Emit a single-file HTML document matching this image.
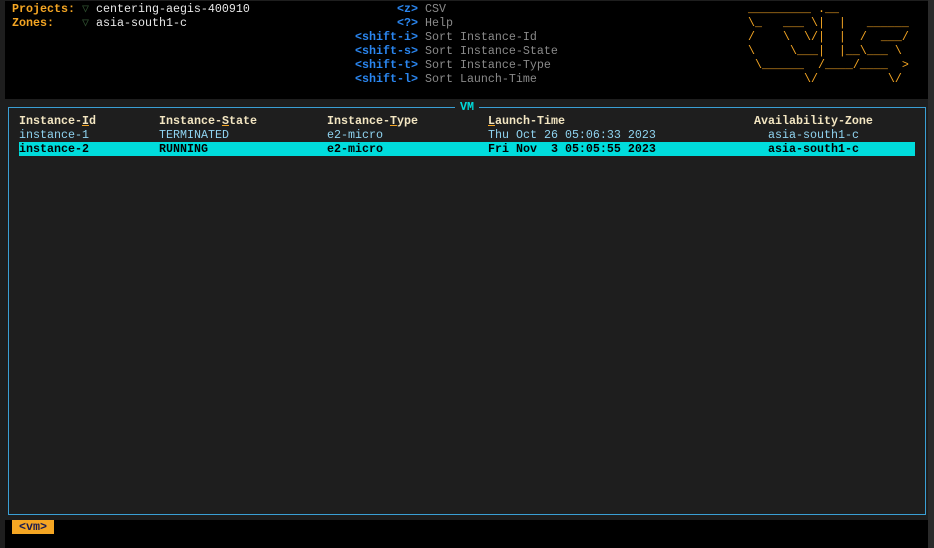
<!DOCTYPE html>
<html><head><meta charset="utf-8"><style>
*{margin:0;padding:0;box-sizing:border-box}
body{width:934px;height:548px;background:#1e1e1e;position:relative;overflow:hidden;font-family:"Liberation Mono",monospace;font-size:11.67px;line-height:14px;white-space:pre}
.a{position:absolute}
.top{left:5px;top:1px;width:923px;height:98px;background:#000}
.bot{left:5px;top:520px;width:923px;height:28px;background:#000}
.rc{left:928px;top:0;width:6px;height:548px;background:#2a2a2a}
.box{left:8px;top:107px;width:918px;height:408px;border:1px solid #3a9fd4}
.o{color:#f5a623;font-weight:bold}
.tri{color:#2f4f2f}
.w{color:#e8e8e8}
.k{color:#2a86f0;font-weight:bold}
.g{color:#8a8a8a}
.logo{color:#f5a623}
.h{color:#f3e6c2;font-weight:bold}
.u{text-decoration:underline;text-decoration-color:#f5a623}
.r1{color:#8fd3f0}
.hl{left:19px;top:142px;width:896px;height:14px;background:#00dcdc}
.r2{color:#000;font-weight:bold}
</style></head><body>
<div class="a top"></div>
<div class="a rc"></div>
<div class="a bot"></div>
<div class="a" style="left:12px;top:2px"><span class="o">Projects:</span> <span class="tri">▽</span> <span class="w">centering-aegis-400910</span>
<span class="o">Zones:</span>    <span class="tri">▽</span> <span class="w">asia-south1-c</span></div>
<div class="a" style="left:355px;top:2px"><span class="k">      &lt;z&gt;</span> <span class="g">CSV</span>
<span class="k">      &lt;?&gt;</span> <span class="g">Help</span>
<span class="k">&lt;shift-i&gt;</span> <span class="g">Sort Instance-Id</span>
<span class="k">&lt;shift-s&gt;</span> <span class="g">Sort Instance-State</span>
<span class="k">&lt;shift-t&gt;</span> <span class="g">Sort Instance-Type</span>
<span class="k">&lt;shift-l&gt;</span> <span class="g">Sort Launch-Time</span></div>
<div class="a logo" style="left:748px;top:2px">_________ .__
\_   ___ \|  |   ______
/    \  \/|  |  /  ___/
\     \___|  |__\___ \
 \______  /____/____  &gt;
        \/          \/</div>
<div class="a box"></div>
<div class="a" style="left:455px;top:100px;width:24px;height:14px;background:#1e1e1e"></div>
<div class="a" style="left:460px;top:100px;color:#00dcdc;font-weight:bold">VM</div>
<div class="a hl"></div>
<div class="a h" style="left:19px;top:114px">Instance-<span class="u">I</span>d</div>
<div class="a h" style="left:159px;top:114px">Instance-<span class="u">S</span>tate</div>
<div class="a h" style="left:327px;top:114px">Instance-<span class="u">T</span>ype</div>
<div class="a h" style="left:488px;top:114px"><span class="u">L</span>aunch-Time</div>
<div class="a h" style="left:754px;top:114px">Availability-Zone</div>
<div class="a r1" style="left:19px;top:128px">instance-1</div>
<div class="a r1" style="left:159px;top:128px">TERMINATED</div>
<div class="a r1" style="left:327px;top:128px">e2-micro</div>
<div class="a r1" style="left:488px;top:128px">Thu Oct 26 05:06:33 2023</div>
<div class="a r1" style="left:768px;top:128px">asia-south1-c</div>
<div class="a r2" style="left:19px;top:142px">instance-2</div>
<div class="a r2" style="left:159px;top:142px">RUNNING</div>
<div class="a r2" style="left:327px;top:142px">e2-micro</div>
<div class="a r2" style="left:488px;top:142px">Fri Nov  3 05:05:55 2023</div>
<div class="a r2" style="left:768px;top:142px">asia-south1-c</div>
<div class="a" style="left:12px;top:520px;width:42px;height:14px;background:#f5a623"></div>
<div class="a" style="left:19px;top:520px;color:#1a1a50;font-weight:bold">&lt;vm&gt;</div>
</body></html>
